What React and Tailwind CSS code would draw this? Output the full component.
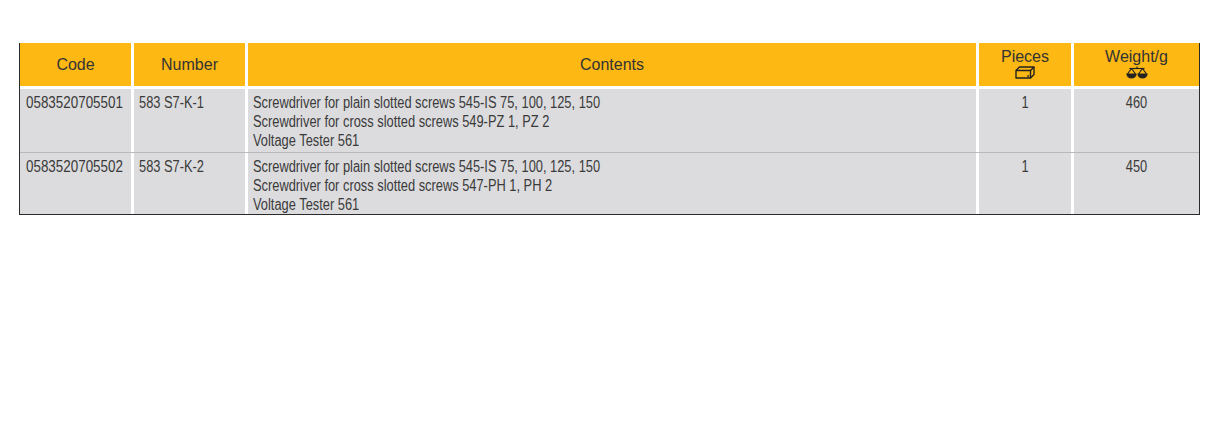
import React from "react";

const rows = [
  {
    code: "0583520705501",
    number: "583 S7-K-1",
    contents: [
      "Screwdriver for plain slotted screws 545-IS 75, 100, 125, 150",
      "Screwdriver for cross slotted screws 549-PZ 1, PZ 2",
      "Voltage Tester 561",
    ],
    pieces: "1",
    weight: "460",
  },
  {
    code: "0583520705502",
    number: "583 S7-K-2",
    contents: [
      "Screwdriver for plain slotted screws 545-IS 75, 100, 125, 150",
      "Screwdriver for cross slotted screws 547-PH 1, PH 2",
      "Voltage Tester 561",
    ],
    pieces: "1",
    weight: "450",
  },
];

const cols = "grid grid-cols-[111px_111px_728px_92px_1fr] gap-x-[3px]";

function BoxIcon() {
  return (
    <svg width="20" height="13" viewBox="0 0 20 13" fill="none" stroke="#222" strokeWidth="1.4" strokeLinejoin="round">
      <path d="M1 4.5 H15.5 V12 H1 Z" />
      <path d="M1 4.5 L4.5 1 H19 L15.5 4.5" />
      <path d="M15.5 12 L19 8.5 V1" />
      <rect x="12.3" y="9.3" width="1.8" height="1.5" fill="#222" stroke="none" />
    </svg>
  );
}

function ScaleIcon() {
  return (
    <svg width="22" height="13" viewBox="0 0 22 13" fill="none" stroke="#222" strokeWidth="1.2">
      <path d="M3.5 2.5 H18.5" />
      <path d="M11 0.5 V2.5" />
      <path d="M5.5 2.5 L1.5 8 M5.5 2.5 L9.5 8" />
      <path d="M16.5 2.5 L12.5 8 M16.5 2.5 L20.5 8" />
      <path d="M1 8 H10 A4.5 3.8 0 0 1 1 8 Z" fill="#222" />
      <path d="M12 8 H21 A4.5 3.8 0 0 1 12 8 Z" fill="#222" />
    </svg>
  );
}

export default function App() {
  return (
    <div className="w-[1217px] h-[440px] bg-white pt-[43px] pl-[19px]" style={{ fontFamily: '"Liberation Sans", Arial, sans-serif' }}>
      <div className="w-[1181px] border-x border-b border-[#2b2b2b] bg-white">
        <div className={`${cols} h-[43px] text-[16px] text-[#333]`}>
          <div className="bg-[#fdb813] flex items-center justify-center">Code</div>
          <div className="bg-[#fdb813] flex items-center justify-center">Number</div>
          <div className="bg-[#fdb813] flex items-center justify-center">Contents</div>
          <div className="bg-[#fdb813] flex flex-col items-center pt-[5px] leading-[18px]">
            <span>Pieces</span>
            <BoxIcon />
          </div>
          <div className="bg-[#fdb813] flex flex-col items-center pt-[5px] leading-[18px]">
            <span>Weight/g</span>
            <ScaleIcon />
          </div>
        </div>
        <div className="h-[3px]" />
        {rows.map((r, i) => (
          <div key={r.code}>
            {i > 0 && <div className="h-px bg-[#b9b9b9]" />}
            <div className={`${cols} text-[16px] leading-[19px] text-[#3a3a3a] whitespace-nowrap`}>
              <div className={`bg-[#dcdcde] pl-[6px] pt-[3.5px] ${i === 0 ? "h-[63px]" : "h-[61px]"}`}>
                <div className="origin-left scale-x-[0.838]">{r.code}</div>
              </div>
              <div className="bg-[#dcdcde] pl-[5px] pt-[3.5px]">
                <div className="origin-left scale-x-[0.803]">{r.number}</div>
              </div>
              <div className="bg-[#dcdcde] pl-[5px] pt-[3.5px]">
                {r.contents.map((c) => (
                  <div key={c} className="origin-left scale-x-[0.803]">{c}</div>
                ))}
              </div>
              <div className="bg-[#dcdcde] text-center pt-[3.5px]">
                <div className="scale-x-[0.803]">{r.pieces}</div>
              </div>
              <div className="bg-[#dcdcde] text-center pt-[3.5px]">
                <div className="scale-x-[0.803]">{r.weight}</div>
              </div>
            </div>
          </div>
        ))}
      </div>
    </div>
  );
}
